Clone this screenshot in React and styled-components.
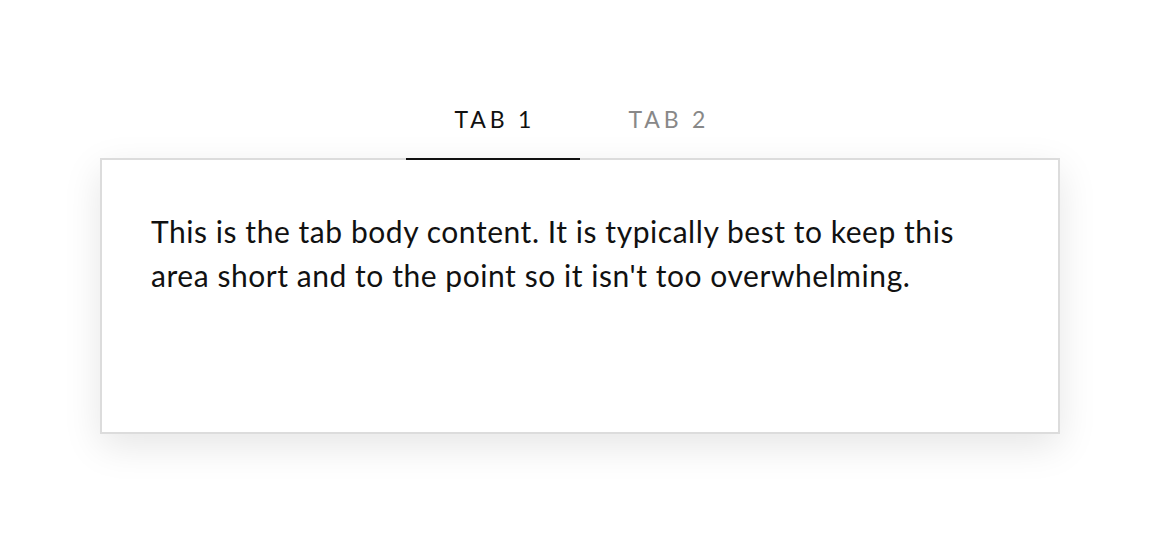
import React, { useState } from 'react';
import styled, { createGlobalStyle } from 'styled-components';

const GlobalStyle = createGlobalStyle`
  html, body {
    margin: 0;
    padding: 0;
    background: #ffffff;
  }
  body {
    font-family: Lato, "Open Sans", sans-serif;
    -webkit-font-smoothing: antialiased;
  }
`;

const Page = styled.div`
  width: 1160px;
  height: 534px;
  padding: 98px 100px 0;
  box-sizing: border-box;
`;

const TabList = styled.div`
  display: flex;
  justify-content: center;
  position: relative;
  z-index: 1;
  margin-bottom: -2px;
`;

const Tab = styled.button`
  width: 174px;
  height: 62px;
  padding: 0 0 19px;
  border: none;
  border-bottom: 2px solid ${(p) => (p.$active ? '#111111' : 'transparent')};
  background: transparent;
  font-family: Lato, sans-serif;
  font-size: 23px;
  font-weight: 400;
  letter-spacing: 3.8px;
  text-indent: 3.8px;
  color: ${(p) => (p.$active ? '#111111' : '#888888')};
  cursor: pointer;
`;

const Panel = styled.div`
  height: 276px;
  box-sizing: border-box;
  border: 2px solid #dcdcdc;
  background: #ffffff;
  padding: 49px 49px;
  box-shadow: 0 12px 36px rgba(0, 0, 0, 0.1);
`;

const Body = styled.p`
  margin: 0;
  max-width: 840px;
  font-family: Lato, sans-serif;
  font-size: 30px;
  letter-spacing: 0.55px;
  line-height: 44px;
  color: #111111;
`;

const tabs = [
  {
    label: 'TAB 1',
    body: "This is the tab body content. It is typically best to keep this area short and to the point so it isn't too overwhelming.",
  },
  { label: 'TAB 2', body: 'This is the second tab body content.' },
];

export default function App() {
  const [active, setActive] = useState(0);
  return (
    <Page>
      <GlobalStyle />
      <TabList>
        {tabs.map((t, i) => (
          <Tab key={t.label} $active={i === active} onClick={() => setActive(i)}>
            {t.label}
          </Tab>
        ))}
      </TabList>
      <Panel>
        <Body>{tabs[active].body}</Body>
      </Panel>
    </Page>
  );
}
